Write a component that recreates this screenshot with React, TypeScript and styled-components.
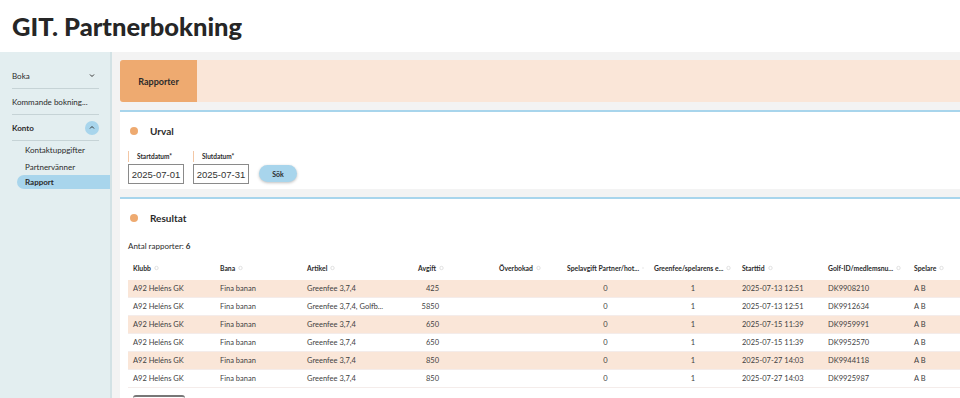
import React from "react";
import styled, { createGlobalStyle } from "styled-components";

const GlobalStyle = createGlobalStyle`
  html, body { margin: 0; padding: 0; }
  body {
    font-family: Lato, "Noto Sans", sans-serif;
    color: #2b2b2b;
    background: #ffffff;
    overflow: hidden;
  }
  * { box-sizing: border-box; }
`;

const orange = "#eeaa70";
const peach = "#fae6d8";
const blue = "#a8d5ec";

const Header = styled.header`
  height: 52px;
  display: flex;
  align-items: center;
  padding-left: 12px;
  font-size: 25.5px;
  font-weight: 900;
  color: #262626;
`;

const Body = styled.div`
  display: flex;
  height: 346px;
`;

const Sidebar = styled.nav`
  width: 112px;
  flex-shrink: 0;
  background: #e3eef0;
  border-right: 2px solid #d3e2e5;
  padding-top: 11px;
`;

const NavItem = styled.div<{ $bold?: boolean }>`
  height: 26px;
  margin: 0 11px 0 12px;
  display: flex;
  align-items: center;
  justify-content: space-between;
  font-size: 8px;
  font-weight: ${(p) => (p.$bold ? 700 : 400)};
  border-bottom: 1px solid #c6d3d6;
  white-space: nowrap;
`;

const Toggle = styled.span<{ $filled?: boolean }>`
  width: 14px;
  height: 14px;
  border-radius: 50%;
  display: flex;
  align-items: center;
  justify-content: center;
  background: ${(p) => (p.$filled ? blue : "transparent")};
`;

const SubList = styled.div`
  display: flex;
  flex-direction: column;
  padding-top: 1px;
`;

const SubItem = styled.div<{ $active?: boolean }>`
  height: ${(p) => (p.$active ? "14px" : "16.5px")};
  margin-left: ${(p) => (p.$active ? "17px" : "0")};
  padding-left: ${(p) => (p.$active ? "8px" : "25px")};
  display: flex;
  align-items: center;
  font-size: 8px;
  font-weight: ${(p) => (p.$active ? 700 : 400)};
  background: ${(p) => (p.$active ? blue : "transparent")};
  border-radius: 7px 0 0 7px;
`;

const Main = styled.main`
  flex: 1;
  min-width: 0;
  background: #f3f3f3;
  padding: 8px 0 0 8px;
  display: flex;
  flex-direction: column;
  gap: 8px;
  overflow: hidden;
`;

const TabBar = styled.div`
  height: 42px;
  flex-shrink: 0;
  display: flex;
  background: ${peach};
  border-radius: 3px 0 0 3px;
`;

const Tab = styled.div`
  width: 77px;
  background: ${orange};
  border-radius: 3px 0 0 3px;
  display: flex;
  align-items: center;
  justify-content: center;
  font-size: 9px;
  font-weight: 700;
`;

const Card = styled.section<{ $grow?: boolean }>`
  background: #fff;
  border-top: 2px solid ${blue};
  padding: 0 0 0 8px;
  flex-shrink: 0;
  ${(p) => (p.$grow ? "flex: 1;" : "height: 79px;")}
`;

const CardTitle = styled.h2`
  margin: 0;
  height: 38px;
  display: flex;
  align-items: center;
  gap: 12px;
  padding-left: 2px;
  font-size: 10px;
  font-weight: 700;
`;

const Dot = styled.span`
  width: 8px;
  height: 8px;
  border-radius: 50%;
  background: ${orange};
`;

const FilterRow = styled.div`
  display: flex;
  align-items: flex-end;
  gap: 9px;
  padding-top: 1px;
`;

const Field = styled.label`
  display: flex;
  flex-direction: column;
  gap: 2px;
`;

const FieldLabel = styled.span`
  border-left: 1px solid #f3c7a5;
  padding: 2px 0 2px 8px;
  font-size: 6.5px;
  font-weight: 700;
`;

const DateBox = styled.div`
  width: 56px;
  height: 20px;
  border: 1px solid #8a8a8a;
  font-family: "Liberation Sans", Arial, sans-serif;
  font-size: 9.5px;
  white-space: nowrap;
  display: flex;
  align-items: center;
  justify-content: center;
  color: #333;
`;

const Button = styled.button`
  width: 38px;
  height: 17px;
  margin: 0 0 2px 1px;
  border: none;
  border-radius: 9px;
  background: ${blue};
  box-shadow: 0 1px 3px rgba(0, 0, 0, 0.25);
  font-family: inherit;
  font-size: 7px;
  font-weight: 700;
  color: #2b2b2b;
`;

const Count = styled.div`
  font-size: 8px;
  padding: 4px 0 0 0;
  height: 18px;
  b { font-weight: 700; }
`;

const cols = "87px 87px 111px 81px 68px 87px 88px 86px 86px 87px";

const Row = styled.div<{ $striped?: boolean; $head?: boolean }>`
  display: grid;
  grid-template-columns: ${cols};
  height: ${(p) => (p.$head ? "25px" : "18px")};
  align-items: center;
  background: ${(p) => (p.$striped ? peach : "#fff")};
  border-bottom: ${(p) => (p.$head ? "none" : "1px solid #f4ecea")};
  font-size: ${(p) => (p.$head ? "6.8px" : "7.5px")};
  font-weight: ${(p) => (p.$head ? 700 : 400)};
  white-space: nowrap;
`;

const Cell = styled.div<{ $align?: "left" | "right" | "center"; $pr?: number }>`
  padding: 0 ${(p) => p.$pr ?? 5}px 0 5px;
  text-align: ${(p) => p.$align ?? "left"};
  overflow: hidden;
  color: #3f3f3f;
`;

const HeadCell = styled.div`
  padding: 0 5px;
  display: flex;
  align-items: center;
  gap: 3px;
  overflow: hidden;
`;

const SortIcon = () => (
  <svg width="5" height="6" viewBox="0 0 5 6">
    <circle cx="2.5" cy="3" r="1.7" fill="none" stroke="#d4d4d4" strokeWidth="0.7" />
  </svg>
);

const Pager = styled.div`
  margin: 7px 0 0 5px;
  width: 52px;
  height: 10px;
  border-top: 2px solid #777;
  border-radius: 3px 3px 0 0;
`;

const Chevron = ({ up }: { up?: boolean }) => (
  <svg width="6" height="5" viewBox="0 0 6 5">
    <path
      d={up ? "M1 3.5 L3 1.5 L5 3.5" : "M1 1.5 L3 3.5 L5 1.5"}
      fill="none"
      stroke="#333"
      strokeWidth="1"
    />
  </svg>
);

const headers = [
  "Klubb",
  "Bana",
  "Artikel",
  "Avgift",
  "Överbokad",
  "Spelavgift Partner/hot...",
  "Greenfee/spelarens e...",
  "Starttid",
  "Golf-ID/medlemsnu...",
  "Spelare",
];

const rows = [
  { artikel: "Greenfee 3,7,4", avgift: "425", start: "2025-07-13 12:51", id: "DK9908210" },
  { artikel: "Greenfee 3,7,4, Golfb...", avgift: "5850", start: "2025-07-13 12:51", id: "DK9912634" },
  { artikel: "Greenfee 3,7,4", avgift: "650", start: "2025-07-15 11:39", id: "DK9959991" },
  { artikel: "Greenfee 3,7,4", avgift: "650", start: "2025-07-15 11:39", id: "DK9952570" },
  { artikel: "Greenfee 3,7,4", avgift: "850", start: "2025-07-27 14:03", id: "DK9944118" },
  { artikel: "Greenfee 3,7,4", avgift: "850", start: "2025-07-27 14:03", id: "DK9925987" },
];

export default function App() {
  return (
    <>
      <GlobalStyle />
      <Header>GIT. Partnerbokning</Header>
      <Body>
        <Sidebar>
          <NavItem>
            Boka
            <Toggle>
              <Chevron />
            </Toggle>
          </NavItem>
          <NavItem>Kommande bokning...</NavItem>
          <NavItem $bold>
            Konto
            <Toggle $filled>
              <Chevron up />
            </Toggle>
          </NavItem>
          <SubList>
            <SubItem>Kontaktuppgifter</SubItem>
            <SubItem>Partnervänner</SubItem>
            <SubItem $active>Rapport</SubItem>
          </SubList>
        </Sidebar>
        <Main>
          <TabBar>
            <Tab>Rapporter</Tab>
          </TabBar>
          <Card>
            <CardTitle>
              <Dot />
              Urval
            </CardTitle>
            <FilterRow>
              <Field>
                <FieldLabel>Startdatum*</FieldLabel>
                <DateBox>2025-07-01</DateBox>
              </Field>
              <Field>
                <FieldLabel>Slutdatum*</FieldLabel>
                <DateBox>2025-07-31</DateBox>
              </Field>
              <Button>Sök</Button>
            </FilterRow>
          </Card>
          <Card $grow>
            <CardTitle>
              <Dot />
              Resultat
            </CardTitle>
            <Count>
              Antal rapporter: <b>6</b>
            </Count>
            <Row $head>
              {headers.map((h) => (
                <HeadCell key={h}>
                  {h}
                  <SortIcon />
                </HeadCell>
              ))}
            </Row>
            {rows.map((r, i) => (
              <Row key={r.id} $striped={i % 2 === 0}>
                <Cell>A92 Heléns GK</Cell>
                <Cell>Fina banan</Cell>
                <Cell>{r.artikel}</Cell>
                <Cell $align="right" $pr={55}>
                  {r.avgift}
                </Cell>
                <Cell />
                <Cell $align="center">0</Cell>
                <Cell $align="center">1</Cell>
                <Cell>{r.start}</Cell>
                <Cell>{r.id}</Cell>
                <Cell>A B</Cell>
              </Row>
            ))}
            <Pager />
          </Card>
        </Main>
      </Body>
    </>
  );
}
